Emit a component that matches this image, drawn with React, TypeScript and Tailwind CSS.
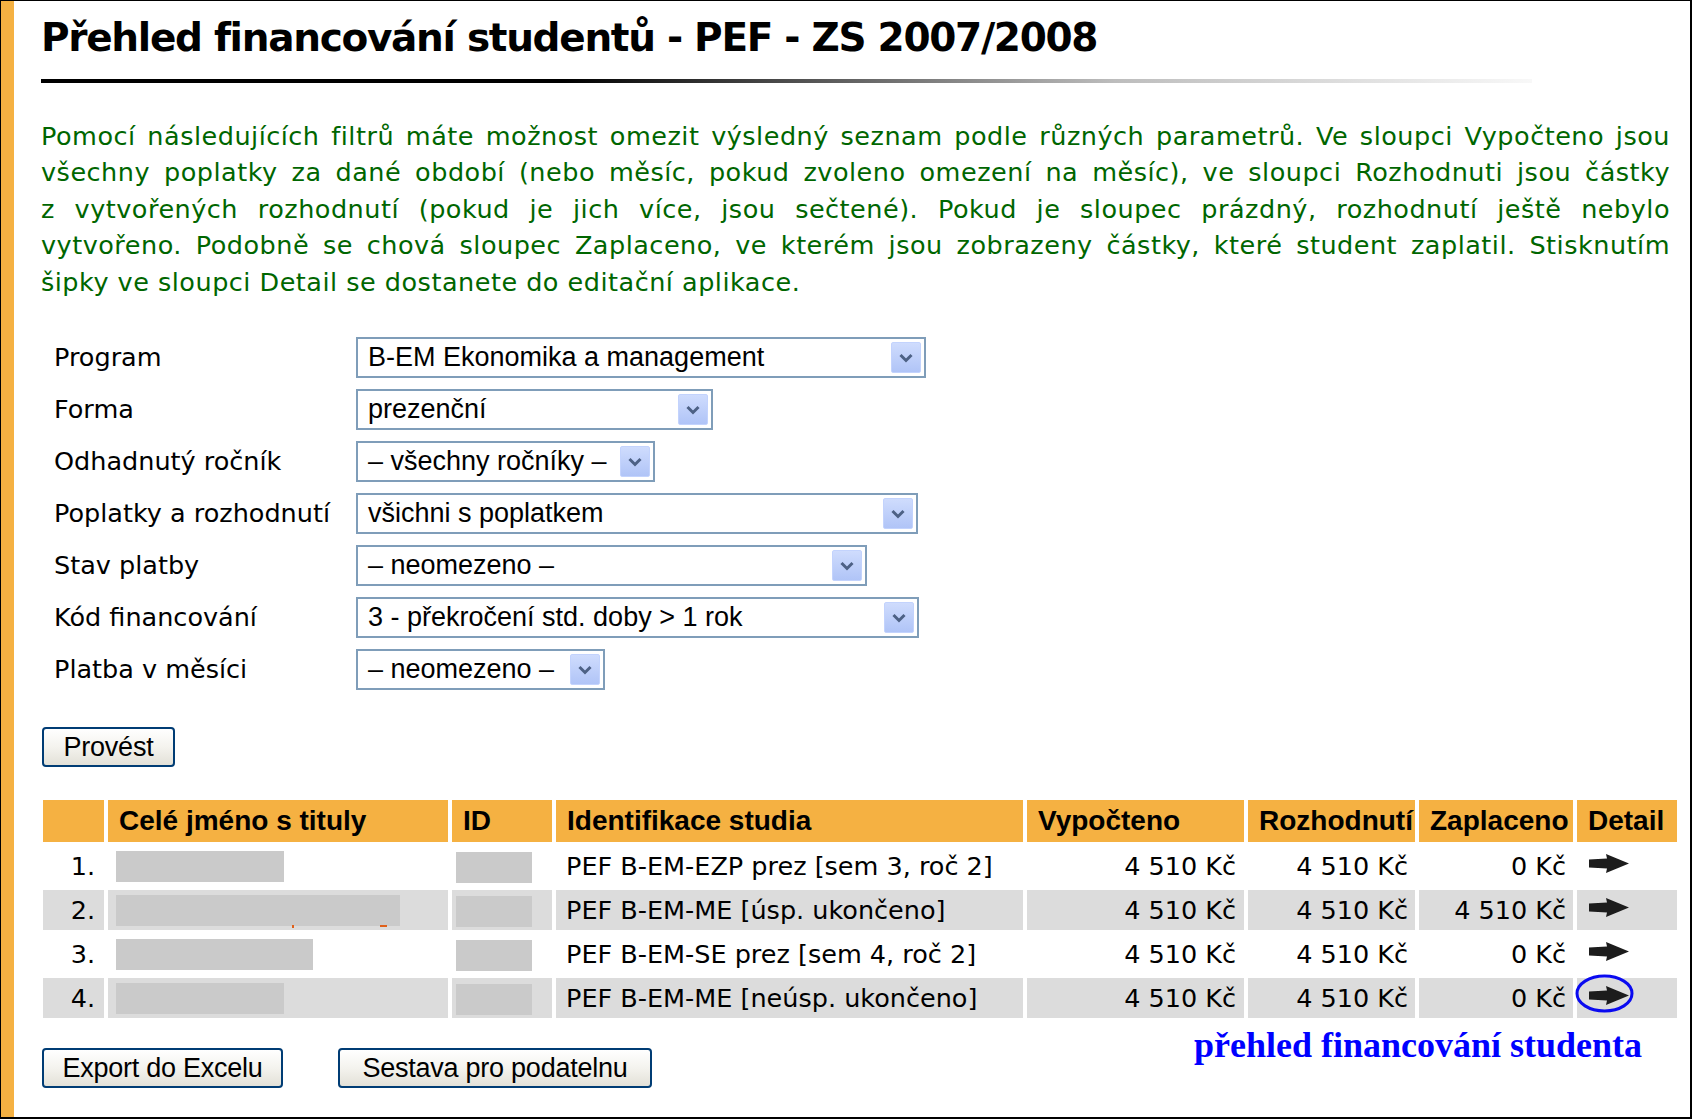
import React from 'react';

const verdana = { fontFamily: '"DejaVu Sans", Verdana, sans-serif' };
const tahoma = { fontFamily: '"Liberation Sans", Arial, sans-serif' };

const introLines = [
  'Pomocí následujících filtrů máte možnost omezit výsledný seznam podle různých parametrů. Ve sloupci Vypočteno jsou',
  'všechny poplatky za dané období (nebo měsíc, pokud zvoleno omezení na měsíc), ve sloupci Rozhodnuti jsou částky',
  'z vytvořených rozhodnutí (pokud je jich více, jsou sečtené). Pokud je sloupec prázdný, rozhodnutí ještě nebylo',
  'vytvořeno. Podobně se chová sloupec Zaplaceno, ve kterém jsou zobrazeny částky, které student zaplatil. Stisknutím',
];

const filters = [
  { label: 'Program', value: 'B-EM Ekonomika a management', width: 570 },
  { label: 'Forma', value: 'prezenční', width: 357 },
  { label: 'Odhadnutý ročník', value: '– všechny ročníky –', width: 299 },
  { label: 'Poplatky a rozhodnutí', value: 'všichni s poplatkem', width: 562 },
  { label: 'Stav platby', value: '– neomezeno –', width: 511 },
  { label: 'Kód financování', value: '3 - překročení std. doby > 1 rok', width: 563 },
  { label: 'Platba v měsíci', value: '– neomezeno –', width: 249 },
];

const rows = [
  { n: '1.', name: 168, study: 'PEF B-EM-EZP prez [sem 3, roč 2]', vyp: '4 510 Kč', roz: '4 510 Kč', zap: '0 Kč' },
  { n: '2.', name: 284, study: 'PEF B-EM-ME [úsp. ukončeno]', vyp: '4 510 Kč', roz: '4 510 Kč', zap: '4 510 Kč' },
  { n: '3.', name: 197, study: 'PEF B-EM-SE prez [sem 4, roč 2]', vyp: '4 510 Kč', roz: '4 510 Kč', zap: '0 Kč' },
  { n: '4.', name: 168, study: 'PEF B-EM-ME [neúsp. ukončeno]', vyp: '4 510 Kč', roz: '4 510 Kč', zap: '0 Kč' },
];

const Select: React.FC<{ value: string; width: number }> = ({ value, width }) => (
  <div
    className="flex items-center justify-between h-[41px] border-2 border-[#7f9db9] bg-white pl-[10px] pr-[3px]"
    style={{ width }}
  >
    <span className="text-[27px] leading-none text-black whitespace-nowrap" style={tahoma}>
      {value}
    </span>
    <span className="flex items-center justify-center w-[30px] h-[31px] rounded-[2px] border border-[#c3d3fd] bg-gradient-to-b from-[#cfdcfd] to-[#b0c4f7]">
      <svg width="14" height="10" viewBox="0 0 14 10">
        <path d="M1.5 2 L7 7.5 L12.5 2" fill="none" stroke="#4d6185" strokeWidth="3" />
      </svg>
    </span>
  </div>
);

const XpButton: React.FC<{ label: string; width: number }> = ({ label, width }) => (
  <button
    type="button"
    className="h-[40px] rounded-[4px] border-2 border-[#003c74] bg-gradient-to-b from-white via-[#f4f3ee] to-[#e3e1d8] text-[27px] leading-none text-black tracking-[-0.25px]"
    style={{ ...tahoma, width }}
  >
    {label}
  </button>
);

const Arrow = () => (
  <svg width="40" height="19" viewBox="0 0 40 19" className="block">
    <path d="M0 5.5 L18 4.5 L17 0 L40 9.5 L17 19 L18 14.5 L0 13.5 Z" fill="#1c1c1c" />
  </svg>
);

const th = 'h-[39px] bg-[#f5b142] text-left align-middle pl-[11px] text-[28px] font-bold text-black whitespace-nowrap';

export default function App() {
  return (
    <div className="w-[1692px] h-[1119px] flex bg-white border-t border-l border-r-2 border-b-2 border-black overflow-hidden">
      <div className="w-[13px] shrink-0 bg-[#f5b142]" />
      <div className="flex-1 pl-[27px] flex flex-col">
        {/* Title */}
        <h1
          className="mt-[17px] text-[39px] leading-[39px] font-bold text-black tracking-[-1.3px] whitespace-nowrap"
          style={verdana}
        >
          Přehled financování studentů - PEF - ZS 2007/2008
        </h1>
        <div className="mt-[22px] h-[4px] w-[1491px] bg-[linear-gradient(to_right,#000_0%,#000_35%,#bdbdbd_72%,#f8f8f8_100%)]" />

        {/* Intro */}
        <div
          className="mt-[35px] w-[1629px] text-[25.5px] leading-[36.4px] tracking-[0.5px] text-[#006600]"
          style={verdana}
        >
          {introLines.map((line) => (
            <div key={line} className="text-justify [text-align-last:justify]">
              {line}
            </div>
          ))}
          <div>šipky ve sloupci Detail se dostanete do editační aplikace.</div>
        </div>

        {/* Filters */}
        <div className="mt-[37px] flex flex-col gap-[11px]">
          {filters.map((f) => (
            <div key={f.label} className="flex items-center h-[41px]">
              <div className="w-[315px] pl-[13px] text-[25.5px] text-black whitespace-nowrap" style={verdana}>
                {f.label}
              </div>
              <Select value={f.value} width={f.width} />
            </div>
          ))}
        </div>

        <div className="mt-[37px] ml-[1px]">
          <XpButton label="Provést" width={133} />
        </div>

        {/* Results */}
        <table
          className="mt-[29px] -ml-[2px] w-[1642px] table-fixed border-separate [border-spacing:4px]"
          style={verdana}
        >
          <colgroup>
            <col className="w-[61px]" />
            <col className="w-[340px]" />
            <col className="w-[100px]" />
            <col className="w-[467px]" />
            <col className="w-[217px]" />
            <col className="w-[167px]" />
            <col className="w-[154px]" />
            <col className="w-[100px]" />
          </colgroup>
          <thead style={tahoma}>
            <tr>
              <th className={th} />
              <th className={th}>Celé jméno s tituly</th>
              <th className={th}>ID</th>
              <th className={th}>Identifikace studia</th>
              <th className={th}>Vypočteno</th>
              <th className={th}>Rozhodnutí</th>
              <th className={th}>Zaplaceno</th>
              <th className={th}>Detail</th>
            </tr>
          </thead>
          <tbody className="text-[25.5px] text-black">
            {rows.map((r, i) => {
              const bg = i % 2 === 1 ? 'bg-[#dcdcdc]' : 'bg-white';
              return (
                <tr key={r.n} className="h-[40px]">
                  <td className={`${bg} text-right pr-[9px] align-middle`}>{r.n}</td>
                  <td className={`${bg} pl-[8px] align-middle relative`}>
                    <div className="h-[31px] bg-[#cacaca]" style={{ width: r.name }} />
                    {i === 1 && (
                      <>
                        <span className="absolute left-[184px] top-[35px] w-[2px] h-[3px] bg-[#e0601a]" />
                        <span className="absolute left-[272px] top-[35px] w-[7px] h-[2px] bg-[#e0601a]" />
                      </>
                    )}
                  </td>
                  <td className={`${bg} pl-[4px] align-middle`}>
                    <div className="w-[76px] h-[31px] bg-[#cacaca] mt-[3px]" />
                  </td>
                  <td className={`${bg} pl-[10px] align-middle whitespace-nowrap`}>{r.study}</td>
                  <td className={`${bg} text-right pr-[8px] align-middle whitespace-nowrap`}>{r.vyp}</td>
                  <td className={`${bg} text-right pr-[7px] align-middle whitespace-nowrap`}>{r.roz}</td>
                  <td className={`${bg} text-right pr-[7px] align-middle whitespace-nowrap`}>{r.zap}</td>
                  <td className={`${bg} pl-[12px] align-top pt-[8px] relative`}>
                    <Arrow />
                    {i === 3 && (
                      <svg
                        width="59"
                        height="39"
                        viewBox="0 0 59 39"
                        className="absolute -left-[2px] -top-[4px]"
                      >
                        <ellipse cx="29.5" cy="19.5" rx="27.5" ry="17.5" fill="none" stroke="#0a0af0" strokeWidth="3" />
                      </svg>
                    )}
                  </td>
                </tr>
              );
            })}
          </tbody>
        </table>

        {/* Bottom actions */}
        <div className="mt-[26px] ml-[1px] w-[1600px] flex items-start">
          <XpButton label="Export do Excelu" width={241} />
          <div className="ml-[55px]">
            <XpButton label="Sestava pro podatelnu" width={314} />
          </div>
          <div
            className="ml-auto -mt-[21px] text-[36px] leading-[36px] font-bold text-[#0000ff] whitespace-nowrap"
            style={{ fontFamily: '"Liberation Serif", "Times New Roman", serif' }}
          >
            přehled financování studenta
          </div>
        </div>
      </div>
    </div>
  );
}
